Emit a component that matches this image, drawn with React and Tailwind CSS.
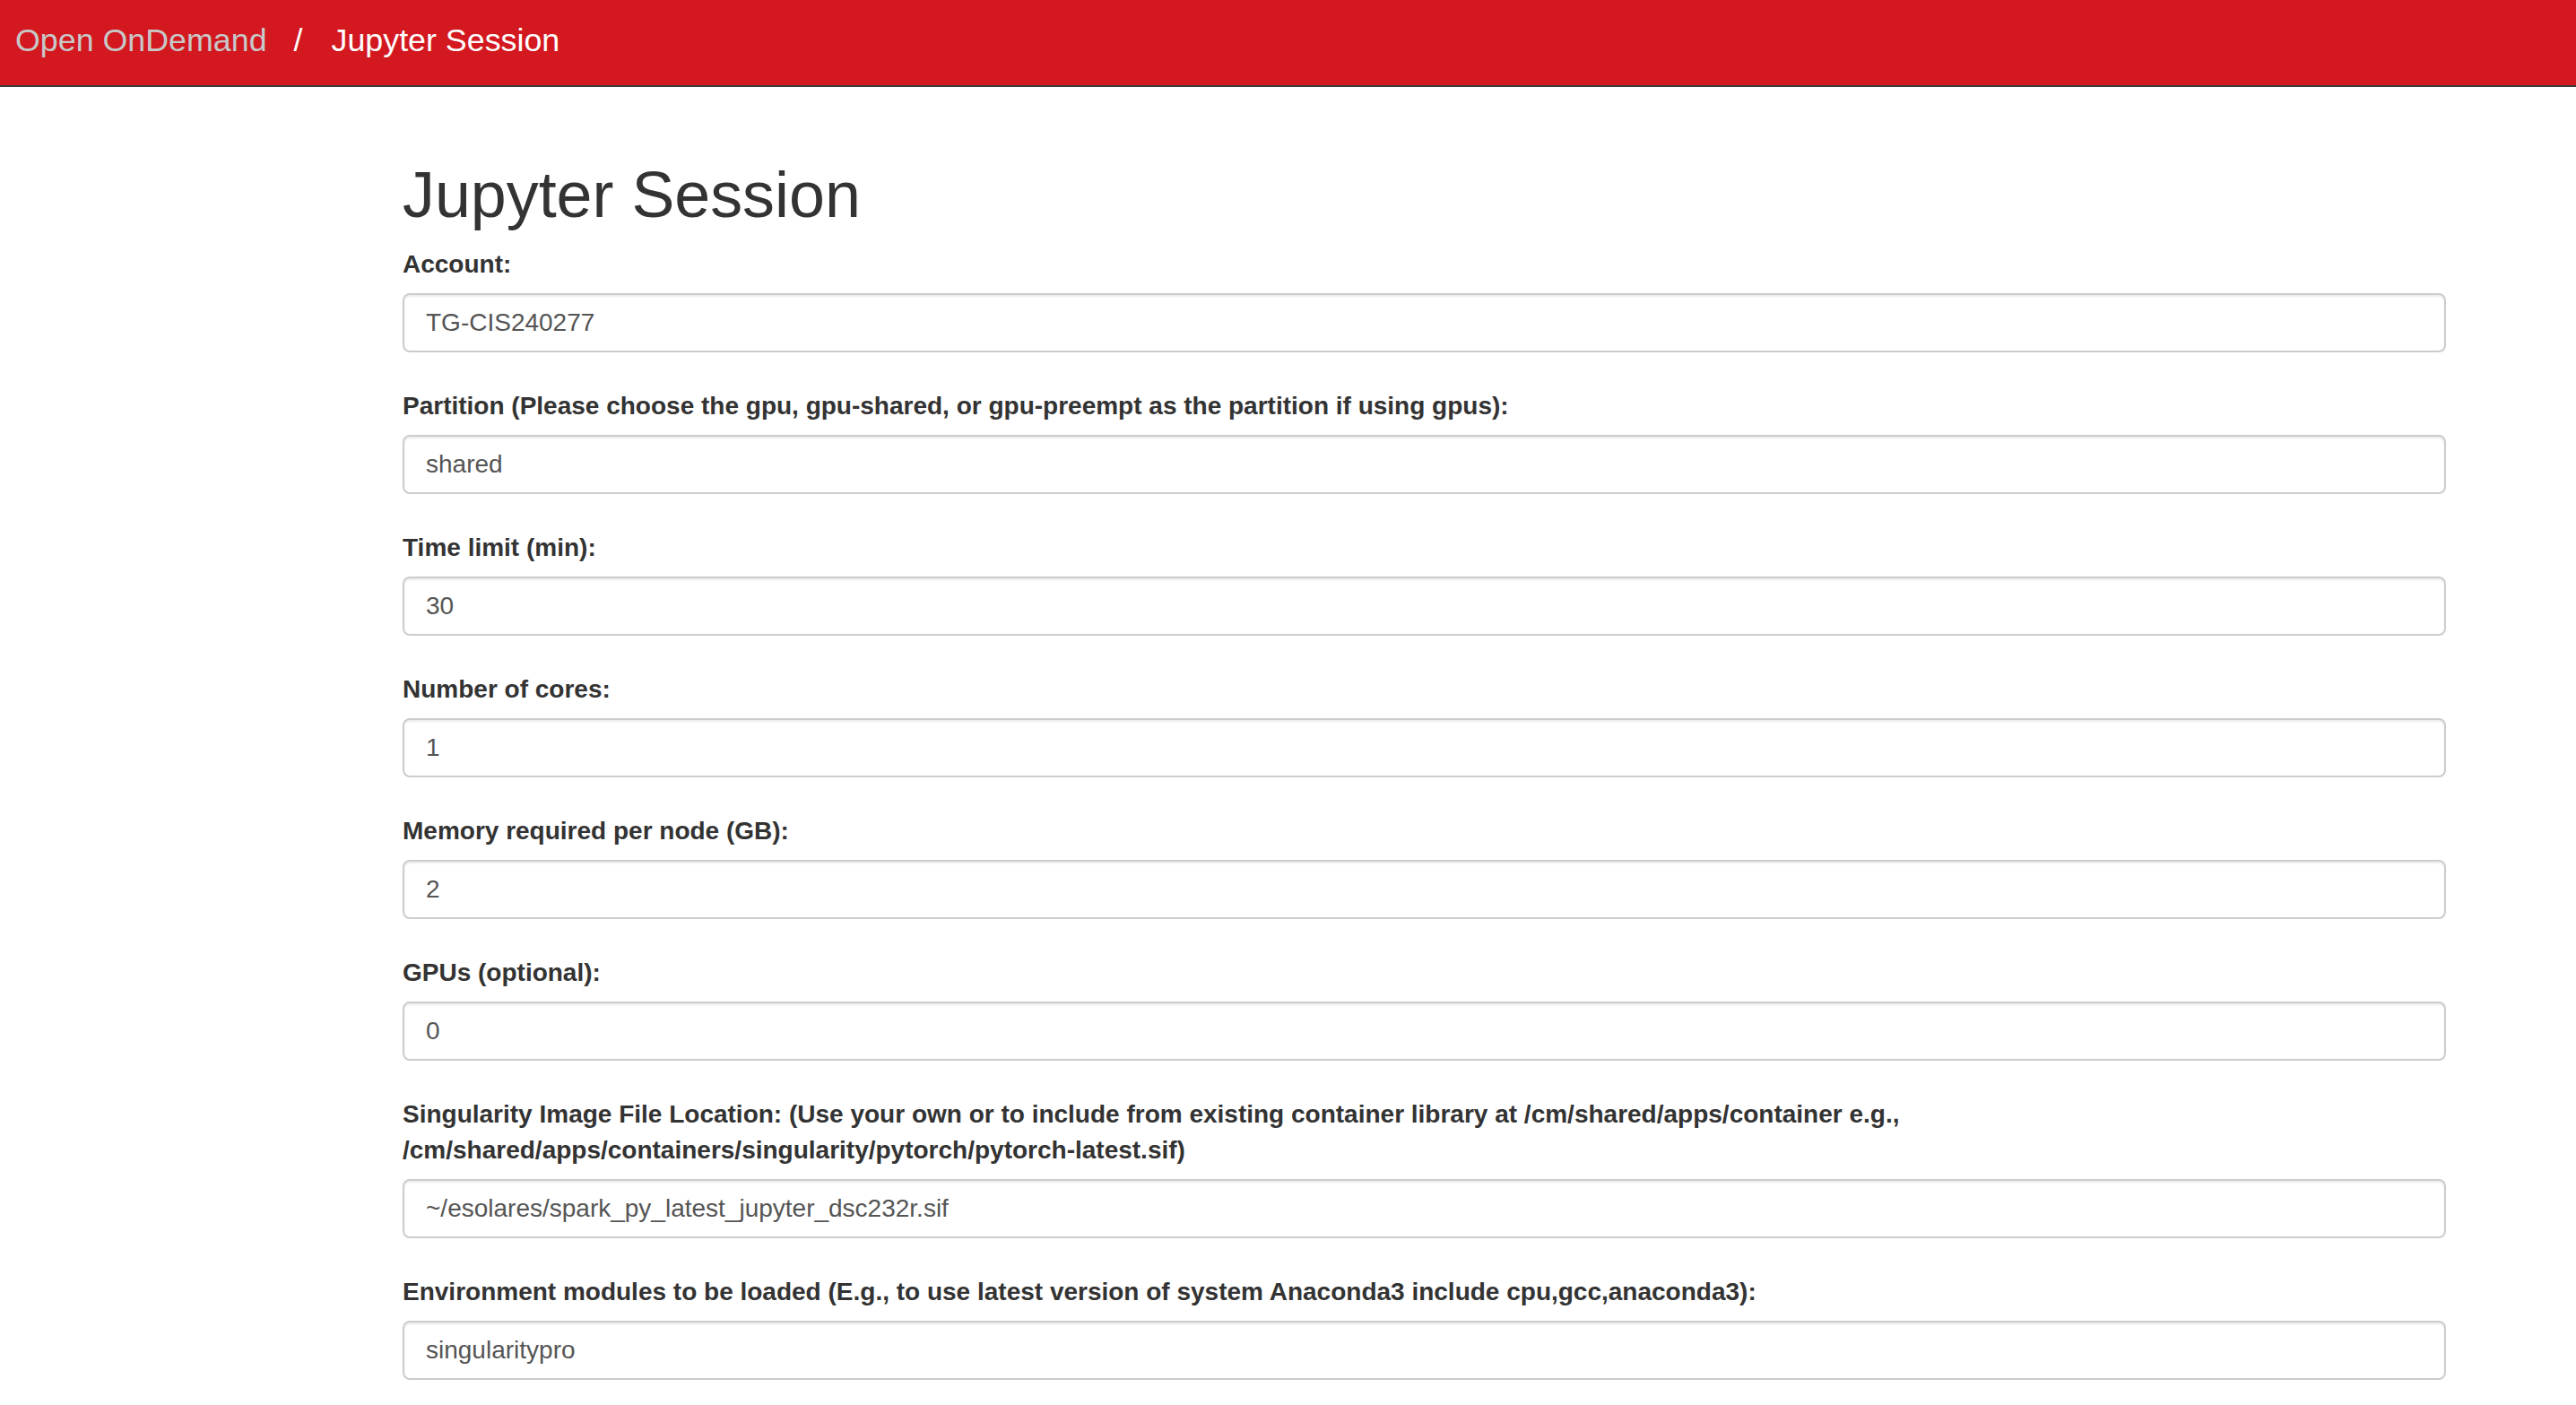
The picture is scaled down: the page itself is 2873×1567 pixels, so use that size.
import React from "react";

const FIELDS = [
  { label: "Account:", value: "TG-CIS240277" },
  {
    label:
      "Partition (Please choose the gpu, gpu-shared, or gpu-preempt as the partition if using gpus):",
    value: "shared",
  },
  { label: "Time limit (min):", value: "30" },
  { label: "Number of cores:", value: "1" },
  { label: "Memory required per node (GB):", value: "2" },
  { label: "GPUs (optional):", value: "0" },
  {
    label:
      "Singularity Image File Location: (Use your own or to include from existing container library at /cm/shared/apps/container e.g., /cm/shared/apps/containers/singularity/pytorch/pytorch-latest.sif)",
    value: "~/esolares/spark_py_latest_jupyter_dsc232r.sif",
  },
  {
    label:
      "Environment modules to be loaded (E.g., to use latest version of system Anaconda3 include cpu,gcc,anaconda3):",
    value: "singularitypro",
  },
];

const FormField = ({ label, value }) => (
  <div className="mb-[40px]">
    <label className="block text-[28px] leading-[40px] font-bold text-[#333] mb-[12px]">
      {label}
    </label>
    <input
      type="text"
      readOnly
      defaultValue={value}
      className="block w-full h-[66px] px-[24px] text-[28px] text-[#555] bg-white border-2 border-[#ccc] rounded-[8px] shadow-[inset_0_2px_2px_rgba(0,0,0,0.075)] outline-none"
    />
  </div>
);

export default function App() {
  return (
    <div
      className="min-h-screen bg-white text-[#333]"
      style={{ fontFamily: '"Liberation Sans", Arial, Helvetica, sans-serif' }}
    >
      {/* top navbar with breadcrumb */}
      <nav className="h-[97px] bg-[#d31820] border-b-2 border-[#3c3c3c]">
        <div className="flex pl-[17px] pt-[25px] text-[35.8px] leading-[40px]">
          <span className="text-[#c8c8c8]">Open OnDemand</span>
          <span className="ml-[30px] text-white">/</span>
          <span className="ml-[32px] text-white">Jupyter Session</span>
        </div>
      </nav>

      <main className="pl-[449px] pr-[145px] pt-[81px]">
        <h1 className="text-[71.8px] leading-[78px] font-normal text-[#333] mb-[19px]">
          Jupyter Session
        </h1>
        <form>
          {FIELDS.map((f) => (
            <FormField key={f.label} label={f.label} value={f.value} />
          ))}
        </form>
      </main>
    </div>
  );
}
